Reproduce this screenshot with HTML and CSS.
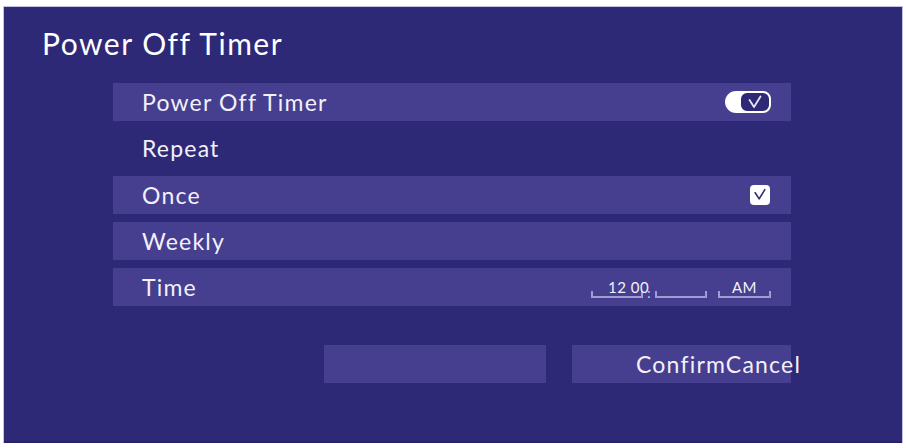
FILE: index.html
```html
<!DOCTYPE html>
<html lang="en">
  <head>
    <meta charset="UTF-8" />
    <meta name="viewport" content="width=device-width, initial-scale=1.0" />
    <title>Power Off Timer</title>
    <link rel="stylesheet" href="styles.css">
  </head>
  <body>
    <div class="dialog">
      <h1>Power Off Timer</h1>
      <div class="options">
        <div class="row item">
          <span>Power Off Timer</span>
          <span class="toggle">
            <span class="knob">
              <svg viewBox="0 0 16 14" width="16" height="14">
                <path d="M2.5 5 L7 12 L13.5 1.5" fill="none" stroke="#e8e6f6" stroke-width="1.8" stroke-linecap="round" stroke-linejoin="round" />
              </svg>
            </span>
          </span>
        </div>
        <div class="row">
          <span>Repeat</span>
        </div>
        <div class="row item">
          <span>Once</span>
          <span class="checkbox">
            <svg viewBox="0 0 16 14" width="14" height="13">
              <path d="M2.5 5 L7 12 L13.5 1.5" fill="none" stroke="#2e2977" stroke-width="1.8" stroke-linecap="round" stroke-linejoin="round" />
            </svg>
          </span>
        </div>
        <div class="row item">
          <span>Weekly</span>
        </div>
        <div class="row item">
          <span>Time</span>
          <span class="clock">
            <span class="field hours">12 00</span>
            <span class="colon">:</span>
            <span class="field"></span>
            <span class="field ampm">AM</span>
          </span>
        </div>
        <div class="buttons">
          <button class="btn"></button>
          <button class="btn confirm">ConfirmCancel</button>
        </div>
      </div>
    </div>
  </body>
</html>
```

FILE: styles.css
```css
body {
  margin: 0;
  background: #fff;
  font-family: Lato, "Open Sans", sans-serif;
}

.dialog {
  margin: 7px 4px 0 4px;
  height: 436px;
  padding: 18px 0 0 0;
  box-sizing: border-box;
  background: #2e2977;
  border-bottom: 2px solid #26216a;
  box-shadow: 0 0 0 1px #c5c1e4;
  color: #f2f0fa;
}

h1 {
  margin: 0 0 22px 38px;
  font-size: 30px;
  line-height: 36px;
  letter-spacing: 1.5px;
  font-weight: normal;
  color: #fff;
}

.options {
  margin-left: 109px;
  width: 678px;
}

.row {
  display: flex;
  align-items: center;
  justify-content: space-between;
  height: 38px;
  margin-bottom: 8.3px;
  padding: 0 20px 0 29px;
  font-size: 23px;
  letter-spacing: 1.2px;
}

.row.item {
  background: #463e8e;
}

.toggle {
  display: flex;
  justify-content: flex-end;
  width: 46px;
  height: 22px;
  background: #fff;
  border-radius: 11px;
}

.knob {
  display: flex;
  align-items: center;
  justify-content: center;
  width: 28px;
  height: 18px;
  border: 2px solid #fff;
  border-radius: 8px;
  background: #2e2977;
}

.checkbox {
  display: flex;
  align-items: center;
  justify-content: center;
  width: 20px;
  height: 20px;
  margin-right: 1px;
  background: #fff;
  border-radius: 4px;
}

.clock {
  display: flex;
  align-items: flex-end;
  height: 38px;
  padding-bottom: 8px;
  box-sizing: border-box;
  letter-spacing: 0.5px;
}

.field {
  width: 52px;
  height: 18px;
  font-size: 15px;
  line-height: 14px;
  white-space: nowrap;
  color: #f2f0fa;
  background:
    linear-gradient(#a19cd4, #a19cd4) left bottom / 2px 7px no-repeat,
    linear-gradient(#a19cd4, #a19cd4) right bottom / 2px 7px no-repeat,
    linear-gradient(#a19cd4, #a19cd4) left bottom / 100% 2px no-repeat;
}

.hours {
  padding-left: 17px;
  box-sizing: border-box;
}

.ampm {
  width: 53px;
  margin-left: 11px;
  text-align: center;
}

.colon {
  width: 12px;
  font-size: 13px;
  line-height: 10px;
  text-align: center;
  color: #d8d5ee;
}

.buttons {
  display: flex;
  justify-content: flex-end;
  gap: 26px;
  margin-top: 39px;
}

.btn {
  width: 222px;
  height: 38px;
  border: none;
  background: #463e8e;
  font-family: inherit;
  font-size: 23px;
  letter-spacing: 1.2px;
  color: #f2f0fa;
  text-align: left;
  white-space: nowrap;
}

.btn.confirm {
  width: 219px;
  padding: 0 0 0 64px;
}
```
